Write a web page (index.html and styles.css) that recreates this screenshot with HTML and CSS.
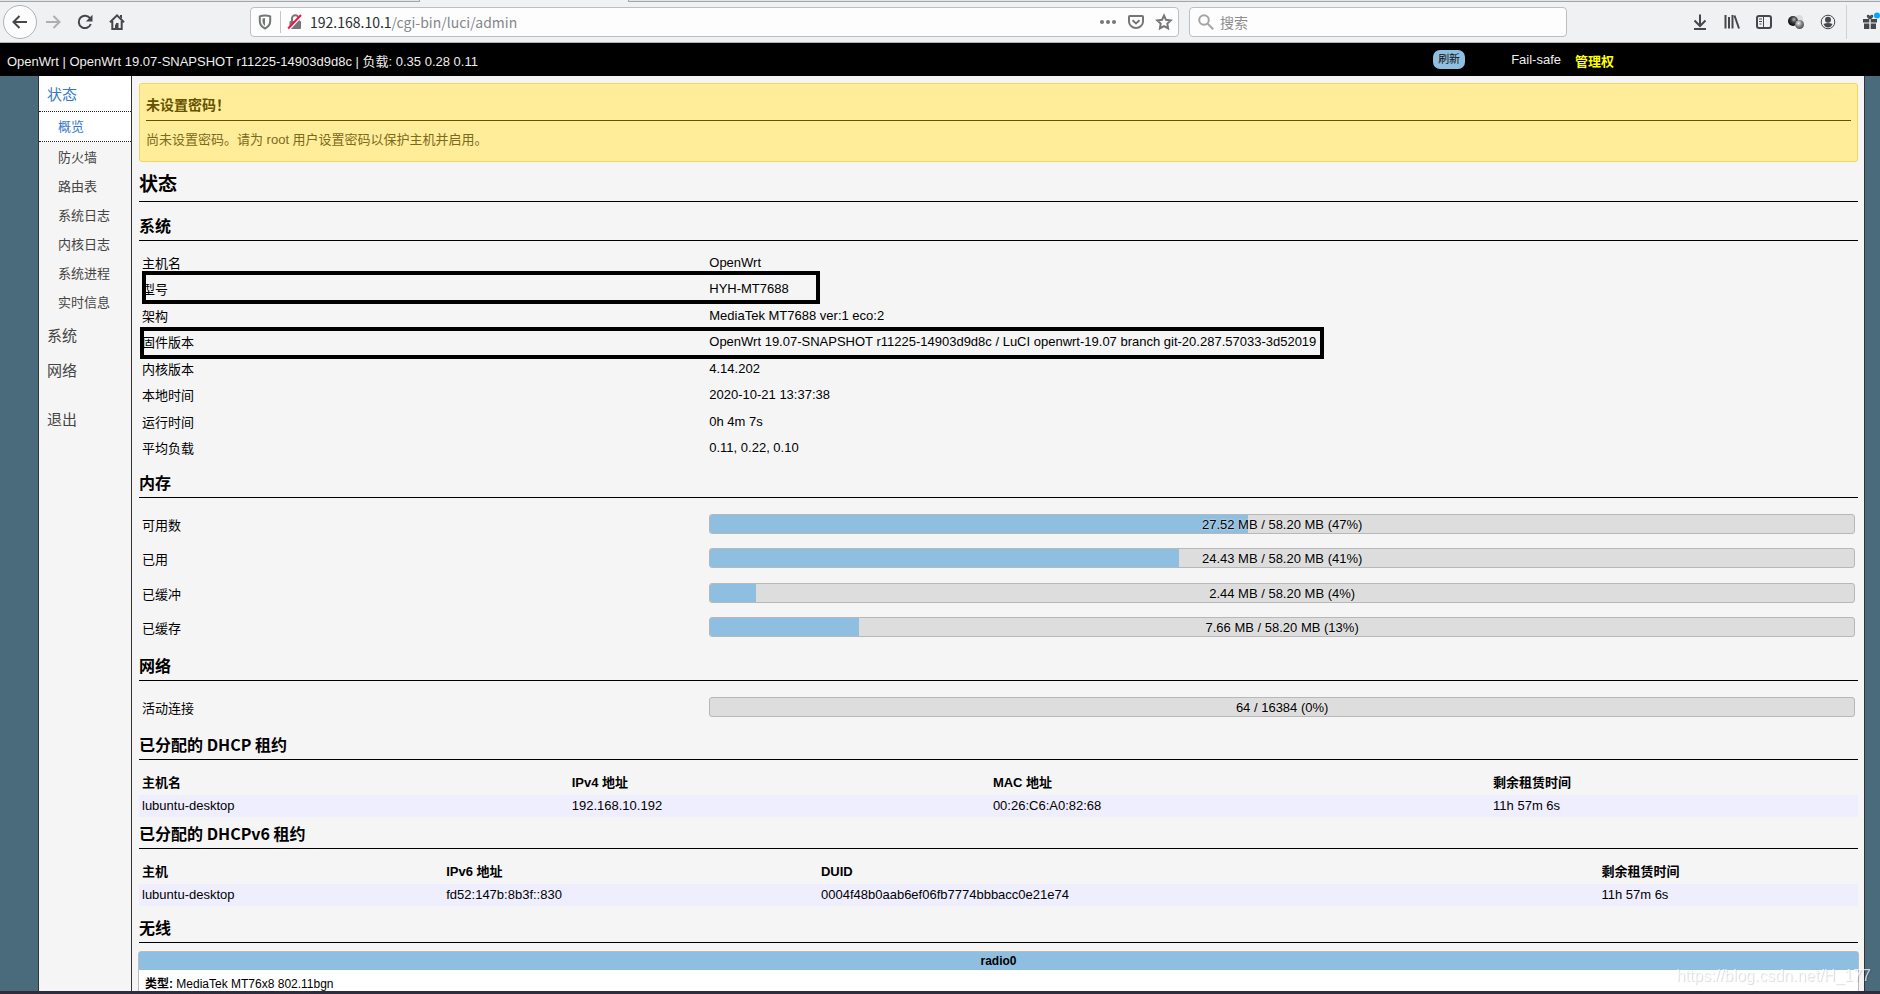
FILE: index.html
```html
<!DOCTYPE html>
<html lang="zh-CN">
<head>
<meta charset="utf-8">
<title>OpenWrt - 概览 - LuCI</title>
<link rel="stylesheet" href="styles.css">
</head>
<body>
<div class="tabstrip"><span class="tab-before"></span><span class="tab-active"></span><span class="tab-after"></span></div>
<div class="toolbar">
  <div class="nav-buttons">
    <button class="back" aria-label="后退"><svg class="icon" viewBox="0 0 16 16"><path d="M15 8H1.500M7.500 2L1.500 8l6 6" /></svg></button>
    <button class="tool faded" aria-label="前进"><svg class="icon" viewBox="0 0 16 16"><path d="M1 8h13.500M8.500 2l6 6-6 6"/></svg></button>
    <button class="tool" aria-label="刷新页面"><svg class="icon" viewBox="0 0 16 16"><path d="M13.200 4.500A6.200 6.200 0 1 0 13.800 10"/><path class="solid" d="M15.500 .8v6.700H8.800z"/></svg></button>
    <button class="tool" aria-label="主页"><svg class="icon" viewBox="0 0 16 16"><path d="M1 8.200L8 1.300l7 6.900M3.300 7v8h9.400V7"/><path class="solid" d="M6 15v-4.500h1V9h2.500v6zM11 1h2v4l-2-2z"/></svg></button>
  </div>
  <div class="urlbar">
    <svg class="icon gray" viewBox="0 0 16 16"><path d="M8 1.500c2 0 4 .4 5.200.9V7c0 3.500-2 6-5.200 7.500C4.800 13 2.800 10.500 2.800 7V2.400C4 1.900 6 1.500 8 1.500z"/><path class="solid" d="M8 4v8c-1.800-1.300-2.500-3-2.500-5V4.500z"/></svg>
    <span class="url-divider"></span>
    <svg class="icon gray" viewBox="0 0 16 16"><path d="M5 7V4.500a3.300 3.300 0 0 1 6.600 0V7"/><rect class="solid" x="2.500" y="7" width="11.500" height="8" rx="1"/><path class="slash-edge" d="M2 15.500L15 1.500"/><path class="slash" d="M1.200 14.500L14 1"/></svg>
    <span class="url"><b class="host">192.168.10.1</b>/cgi-bin/luci/admin</span>
    <svg class="icon gray" viewBox="0 0 16 16"><circle class="solid" cx="2" cy="8" r="2"/><circle class="solid" cx="8" cy="8" r="2"/><circle class="solid" cx="14" cy="8" r="2"/></svg>
    <svg class="icon gray" viewBox="0 0 16 16"><path d="M1.800 2h12.400q.8 0 .8.800V7.500a7 6.500 0 0 1-14 0V2.800q0-.8.800-.8zM4.500 6.300L8 9.500l3.500-3.200"/></svg>
    <svg class="icon gray" viewBox="0 0 16 16"><path d="M8 1.500l2 4.300 4.700.6-3.400 3.200.8 4.800L8 12.100l-4.100 2.300.8-4.800L1.300 6.400 6 5.800z"/></svg>
  </div>
  <label class="searchbar">
    <svg class="icon pale" viewBox="0 0 16 16"><circle cx="6" cy="6" r="4.800"/><path d="M9.600 9.600L15.200 15.200"/></svg>
    <input class="search-input" type="text" placeholder="搜索" aria-label="搜索">
  </label>
  <div class="tools">
    <svg class="icon" viewBox="0 0 16 16"><path d="M8 .5v11M2.500 6.500L8 12l5.500-5.500M2 15h12"/></svg>
    <svg class="icon" viewBox="0 0 16 16"><path d="M1.500 1v13.500M5 3v11.500M8.500 1v13.500M10.500 1.500l4.500 13"/></svg>
    <svg class="icon" viewBox="0 0 16 16"><rect x="1" y="2" width="14" height="12" rx="2"/><path class="thin" d="M7.500 2v12M3 5h3M3 7.500h3M3.500 10h2"/></svg>
    <svg class="icon" viewBox="0 0 16 16"><defs><radialGradient id="dark" cx=".6" cy=".35" r=".7"><stop offset="0" stop-color="#bbb"/><stop offset=".4" stop-color="#444"/><stop offset="1" stop-color="#000"/></radialGradient><radialGradient id="mid" cx=".4" cy=".35" r=".7"><stop offset="0" stop-color="#eee"/><stop offset=".5" stop-color="#888"/><stop offset="1" stop-color="#444"/></radialGradient></defs><circle cx="11" cy="5" r="4" fill="#dcdcdc" stroke="none"/><circle cx="5" cy="7" r="5" fill="url(#dark)" stroke="none"/><circle cx="11.500" cy="10.500" r="4.500" fill="url(#mid)" stroke="none"/></svg>
    <svg class="icon" viewBox="0 0 16 16"><circle class="thin" cx="8" cy="8" r="6.800"/><circle class="solid" cx="8" cy="5.800" r="3"/><path class="solid" d="M3.500 10q4.500-2 9 0-1.500 3.500-4.500 3.500T3.500 10z"/></svg>
    <span class="tools-divider"></span>
    <svg class="icon" viewBox="0 0 16 16"><path class="solid" d="M1 5h6.300v3.500H1zM8.700 5H15v3.500H8.700zM2 9.500h5.300V15H2zM8.700 9.500H14V15H8.700z"/><path class="bow" d="M8 4.500C5.500 4 5 1.500 6 1.500S8 3 8 4.500C8 3 9 1.500 10 1.500S10.500 4 8 4.500"/><circle cx="15" cy="1.500" r="3" fill="#00a9ff" stroke="none"/></svg>
  </div>
</div>

<header class="masthead">
  <span class="host-info">OpenWrt | OpenWrt 19.07-SNAPSHOT r11225-14903d9d8c | 负载: 0.35 0.28 0.11</span>
  <button class="refresh">刷新</button>
  <a class="mode" href="#">Fail-safe</a>
  <a class="mode mode-active" href="#">管理权</a>
</header>

<div class="page">
  <nav class="sidebar">
    <a class="section section-open" href="#">状态</a>
    <a class="sub sub-open" href="#">概览</a>
    <div class="subs">
      <a class="sub" href="#">防火墙</a>
      <a class="sub" href="#">路由表</a>
      <a class="sub" href="#">系统日志</a>
      <a class="sub" href="#">内核日志</a>
      <a class="sub" href="#">系统进程</a>
      <a class="sub" href="#">实时信息</a>
    </div>
    <a class="section" href="#">系统</a>
    <a class="section" href="#">网络</a>
    <a class="section logout" href="#">退出</a>
  </nav>
  <main class="content">
    <div class="alert">
      <h4 class="alert-title">未设置密码！</h4>
      <p class="alert-text">尚未设置密码。请为 root 用户设置密码以保护主机并启用。</p>
    </div>
    <h2 class="title">状态</h2>

    <h3 class="heading">系统</h3>
    <div class="marked">
      <table class="info">
        <tr><th scope="row">主机名</th><td>OpenWrt</td></tr>
        <tr><th scope="row">型号</th><td>HYH-MT7688</td></tr>
        <tr><th scope="row">架构</th><td>MediaTek MT7688 ver:1 eco:2</td></tr>
        <tr><th scope="row">固件版本</th><td>OpenWrt 19.07-SNAPSHOT r11225-14903d9d8c / LuCI openwrt-19.07 branch git-20.287.57033-3d52019</td></tr>
        <tr><th scope="row">内核版本</th><td>4.14.202</td></tr>
        <tr><th scope="row">本地时间</th><td>2020-10-21 13:37:38</td></tr>
        <tr><th scope="row">运行时间</th><td>0h 4m 7s</td></tr>
        <tr><th scope="row">平均负载</th><td>0.11, 0.22, 0.10</td></tr>
      </table>
      <span class="mark mark-model"></span>
      <span class="mark mark-firmware"></span>
    </div>

    <h3 class="heading">内存</h3>
    <table class="info meters">
      <tr><th scope="row">可用数</th><td><div class="meter"><div class="fill" style="width:47%"></div><span class="meter-text">27.52 MB / 58.20 MB (47%)</span></div></td></tr>
      <tr><th scope="row">已用</th><td><div class="meter"><div class="fill" style="width:41%"></div><span class="meter-text">24.43 MB / 58.20 MB (41%)</span></div></td></tr>
      <tr><th scope="row">已缓冲</th><td><div class="meter"><div class="fill" style="width:4%"></div><span class="meter-text">2.44 MB / 58.20 MB (4%)</span></div></td></tr>
      <tr><th scope="row">已缓存</th><td><div class="meter"><div class="fill" style="width:13%"></div><span class="meter-text">7.66 MB / 58.20 MB (13%)</span></div></td></tr>
    </table>

    <h3 class="heading">网络</h3>
    <table class="info meters">
      <tr><th scope="row">活动连接</th><td><div class="meter"><div class="fill" style="width:0%"></div><span class="meter-text">64 / 16384 (0%)</span></div></td></tr>
    </table>

    <h3 class="heading">已分配的 DHCP 租约</h3>
    <table class="leases">
      <colgroup><col class="v4-host"><col class="v4-ip"><col class="v4-mac"><col></colgroup>
      <tr><th>主机名</th><th>IPv4 地址</th><th>MAC 地址</th><th>剩余租赁时间</th></tr>
      <tr><td>lubuntu-desktop</td><td>192.168.10.192</td><td>00:26:C6:A0:82:68</td><td>11h 57m 6s</td></tr>
    </table>

    <h3 class="heading heading-tight">已分配的 DHCPv6 租约</h3>
    <table class="leases">
      <colgroup><col class="v6-host"><col class="v6-ip"><col class="v6-duid"><col></colgroup>
      <tr><th>主机</th><th>IPv6 地址</th><th>DUID</th><th>剩余租赁时间</th></tr>
      <tr><td>lubuntu-desktop</td><td>fd52:147b:8b3f::830</td><td>0004f48b0aab6ef06fb7774bbbacc0e21e74</td><td>11h 57m 6s</td></tr>
    </table>

    <h3 class="heading">无线</h3>
    <section class="radio">
      <div class="radio-name">radio0</div>
      <div class="radio-body"><b>类型:</b> MediaTek MT76x8 802.11bgn</div>
    </section>
  </main>
</div>
<div class="desktop-edge"></div>
<span class="watermark">https://blog.csdn.net/H_177</span>
</body>
</html>
```

FILE: styles.css
```css
* { box-sizing: border-box; }
body {
  margin: 0;
  height: 100vh;
  display: flex;
  flex-direction: column;
  overflow: hidden;
  background: #4a6b7c;
  color: #000;
  font: 13px/20px "Liberation Sans", "Noto Sans CJK SC", sans-serif;
}
button { border: 0; padding: 0; background: none; font: inherit; }
a { color: inherit; text-decoration: none; }
table { width: 100%; border-collapse: collapse; table-layout: fixed; }
th, td { padding: 0 3px; text-align: left; vertical-align: baseline; }

/* Browser chrome */
.tabstrip { display: flex; flex: none; height: 2px; background: #f0f1f3; }
.tab-before { width: 420px; border-bottom: 1px solid #a3a5a7; border-right: 1px solid #a3a5a7; background: #e4e5e7; }
.tab-active { width: 208px; }
.tab-after { flex: 1; border-bottom: 1px solid #a3a5a7; border-left: 1px solid #a3a5a7; background: #e4e5e7; }
.toolbar {
  display: flex;
  align-items: center;
  flex: none;
  height: 41px;
  background: #f0f1f3;
  border-bottom: 1px solid #b0b2b4;
}
.icon { width: 16px; height: 16px; flex: none; fill: none; stroke: #45484a; stroke-width: 2; overflow: visible; }
.icon .solid { fill: #45484a; stroke: none; }
.icon .thin { stroke-width: 1; }
.icon .bow { stroke-width: 1.5; }
.icon.gray { stroke: #747677; }
.icon.gray .solid { fill: #747677; }
.icon.pale { stroke: #a3a4a5; }
.icon .slash-edge { stroke: #fff; }
.icon .slash { stroke: #f5124a; }
.nav-buttons { display: flex; align-items: center; gap: 16px; width: 250px; padding-left: 3px; }
.back {
  display: flex;
  align-items: center;
  justify-content: center;
  width: 34px;
  height: 34px;
  margin-right: -8px;
  border: 1px solid #b0b2b4;
  border-radius: 50%;
  background: #fcfcfd;
}
.tool { display: flex; }
.faded .icon { stroke: #adafb0; }
.urlbar, .searchbar {
  display: flex;
  align-items: center;
  height: 30px;
  border: 1px solid #bcbec0;
  border-radius: 4px;
  background: #fdfdfe;
}
.urlbar { flex: 1; min-width: 0; gap: 12px; padding: 0 6px; }
.url-divider { width: 1px; height: 22px; margin: 0 -6px 0 -5px; background: #c4c6c8; }
.url { flex: 1; margin-left: -5px; color: #85878a; font: 14px/20px "Noto Sans CJK SC", sans-serif; }
.host { color: #2c2e30; font-weight: 400; }
.searchbar { width: 378px; margin-left: 10px; padding: 0 8px; gap: 6px; }
.search-input {
  flex: 1;
  min-width: 0;
  border: 0;
  padding: 0;
  background: none;
  font: 14px/20px "Noto Sans CJK SC", sans-serif;
}
.search-input::placeholder { color: #8c8e90; opacity: 1; }
.tools { display: flex; align-items: center; gap: 16px; padding: 0 2px 0 125px; }
.tools-divider { width: 1px; height: 34px; margin: 0 -1px 0 -6px; background: #d0d1d3; }

/* LuCI header */
.masthead { display: flex; align-items: center; flex: none; height: 33px; padding: 0 266px 0 7px; background: #000; color: #eee; }
.host-info { flex: 1; padding-top: 4px; }
.refresh {
  height: 19px;
  margin-right: 46px;
  padding: 0 5px;
  border-radius: 7px;
  background: #8fbfe0;
  color: #111;
  font-size: 11px;
  line-height: 19px;
}
.mode { margin-right: 14px; }
.mode-active { margin-right: 0; padding-top: 4px; color: #ff0; font-weight: 700; }

/* Page frame */
.page { display: flex; flex: 1; min-height: 0; margin: 0 15px 0 38px; border: solid #333; border-width: 0 1px; background: #f5f5f5; overflow: hidden; }
.sidebar { display: flex; flex-direction: column; flex: none; width: 93px; border-right: 1px solid #333; color: #444; }
.section { padding-left: 8px; font-size: 15px; line-height: 35px; }
.section-open, .sub-open { background: #fff; color: #3778c8; border-bottom: 1px dotted #222; }
.section-open { padding-top: 2px; line-height: 33px; }
.subs { display: flex; flex-direction: column; padding: 1px 0; }
.sub { padding-left: 19px; line-height: 29px; }
.sub-open { padding-top: 1px; line-height: 28px; }
.logout { margin-top: 14px; }
.content { flex: 1; min-width: 0; padding: 7px 6px 0 7px; }

.alert { padding: 9px 6px; border: 1px solid #ecd75f; border-radius: 3px; background: #ffed9a; color: #665200; }
.alert-title { margin: 0; padding-bottom: 3px; border-bottom: 1px solid #665200; font-size: 14px; line-height: 24px; }
.alert-text { margin: 8px 0 1px; color: #7c6a1c; line-height: 22px; }
.title { margin: 7px 0 11px; padding-bottom: 4px; border-bottom: 1px solid #000; font: 700 19px/28px "Noto Sans CJK SC", sans-serif; }
.heading { margin: 9px 0 8px; padding-bottom: 3px; border-bottom: 1px solid #000; font: 700 16px/24px "Noto Sans CJK SC", sans-serif; }
.heading-tight { margin-top: 4px; }

.marked { position: relative; }
.info th, .info td { vertical-align: top; }
.info th { width: 33%; padding-top: 4px; font-weight: 400; line-height: 22px; }
.info td { padding-top: 2px; line-height: 24px; }
.info tr { height: 26px; }
.info tr:nth-child(even) { height: 27px; }
.mark { position: absolute; border: 4px solid #000; }
.mark-model { left: 3px; top: 22px; width: 678px; height: 33px; }
.mark-firmware { left: 1px; top: 78px; width: 1184px; height: 32px; }

.meters tr { height: 34px; }
.meters tr:nth-child(even) { height: 35px; }
.meters th { padding-top: 9px; }
.meters td { padding-top: 8px; }
.meter { position: relative; height: 20px; border: 1px solid #b8b8b8; border-radius: 3px; background: #ddd; overflow: hidden; }
.fill { height: 100%; background: #8fbfe0; }
.meter-text { position: absolute; inset: 0; text-align: center; line-height: 20px; text-shadow: 0 0 2px #eee; }

.leases tr { height: 27px; }
.leases tr + tr { height: 22px; background: #efeefe; }
.leases th { padding-top: 3px; line-height: 24px; }
.leases td { line-height: 22px; }
.v4-host { width: 25%; }
.v4-ip { width: 24.5%; }
.v4-mac { width: 29.1%; }
.v6-host { width: 17.7%; }
.v6-ip { width: 21.8%; }
.v6-duid { width: 45.4%; }

.radio { margin: 0 -1px; border: 1px solid #bbb; border-radius: 3px; background: #fff; font-size: 12px; }
.radio-name { background: #8fbfe0; font-weight: 700; line-height: 18px; text-align: center; }
.radio-body { padding: 7px 6px; line-height: 14px; }

.desktop-edge { flex: none; height: 3px; background: #2d2d3d; }
.watermark { position: fixed; right: 9px; bottom: 8px; color: rgba(255, 255, 255, .7); font-size: 16px; text-shadow: 1px 1px 1px rgba(0, 0, 0, .15); }
```
